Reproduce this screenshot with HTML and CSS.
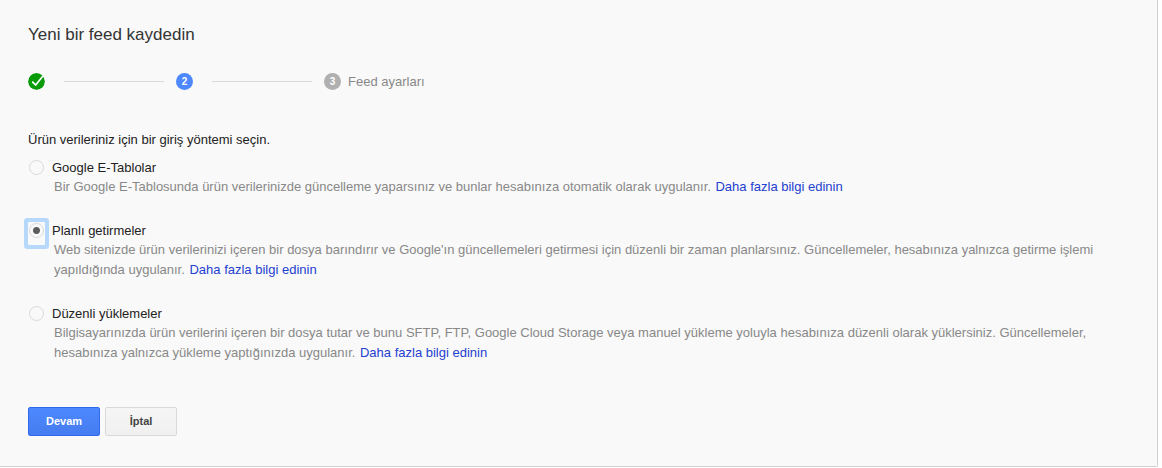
FILE: index.html
```html
<!DOCTYPE html>
<html lang="tr">
<head>
    <meta charset="UTF-8">
    <meta name="viewport" content="width=device-width, initial-scale=1.0">
    <title>Yeni bir feed kaydedin</title>
    <link rel="stylesheet" href="styles.css">
</head>
<body>
    <form class="panel">
        <h1>Yeni bir feed kaydedin</h1>

        <ol class="steps">
            <li class="step">
                <svg class="step-icon" viewBox="0 0 17 17" aria-hidden="true">
                    <circle cx="8.5" cy="8.5" r="8.5" fill="#0a9b0a"/>
                    <path d="M4.2 8.6 L7.7 12 L14.9 3" fill="none" stroke="#fff" stroke-width="1.7"/>
                </svg>
            </li>
            <li class="step">
                <span class="step-icon step-current">2</span>
            </li>
            <li class="step">
                <span class="step-icon step-todo">3</span>
                <span class="step-label">Feed ayarları</span>
            </li>
        </ol>

        <fieldset class="methods">
            <legend>Ürün verileriniz için bir giriş yöntemi seçin.</legend>

            <div class="method">
                <span class="radio"><input type="radio" name="method" id="sheets"></span>
                <label for="sheets">Google E-Tablolar</label>
                <p>Bir Google E-Tablosunda ürün verilerinizde güncelleme yaparsınız ve bunlar hesabınıza otomatik olarak uygulanır. <a href="#">Daha fazla bilgi edinin</a></p>
            </div>

            <div class="method">
                <span class="radio radio-active"><input type="radio" name="method" id="fetch" checked></span>
                <label for="fetch">Planlı getirmeler</label>
                <p>Web sitenizde ürün verilerinizi içeren bir dosya barındırır ve Google'ın güncellemeleri getirmesi için düzenli bir zaman planlarsınız. Güncellemeler, hesabınıza yalnızca getirme işlemi yapıldığında uygulanır. <a href="#">Daha fazla bilgi edinin</a></p>
            </div>

            <div class="method">
                <span class="radio"><input type="radio" name="method" id="upload"></span>
                <label for="upload">Düzenli yüklemeler</label>
                <p>Bilgisayarınızda ürün verilerini içeren bir dosya tutar ve bunu SFTP, FTP, Google Cloud Storage veya manuel yükleme yoluyla hesabınıza düzenli olarak yüklersiniz. Güncellemeler, hesabınıza yalnızca yükleme yaptığınızda uygulanır. <a href="#">Daha fazla bilgi edinin</a></p>
            </div>
        </fieldset>

        <div class="actions">
            <button type="button" class="primary">Devam</button>
            <button type="button">İptal</button>
        </div>
    </form>
</body>
</html>
```

FILE: styles.css
```css
* {
    box-sizing: border-box;
}
body {
    margin: 0;
    padding-right: 4px;
    background-color: #fff;
    color: #222;
    font-family: "Liberation Sans", Arial, sans-serif;
    font-size: 13px;
    line-height: 20px;
}
.panel {
    padding: 25px 28px 30px;
    background-color: #f9f9f9;
    border-right: 1px solid #d2d2d2;
    border-bottom: 1px solid #d2d2d2;
    border-bottom-right-radius: 2px;
}
h1 {
    margin: 0;
    color: #333;
    font-size: 17px;
    font-weight: normal;
    line-height: 20px;
}
.steps {
    display: flex;
    margin: 27px 0 39px;
    padding: 0;
    list-style: none;
}
.step {
    display: flex;
    align-items: center;
    height: 19px;
}
.step:not(:last-child)::after {
    content: "";
    width: 100px;
    height: 1px;
    margin: 0 12px 0 19px;
    background-color: #d9d9d9;
}
.step-icon {
    width: 17px;
    height: 17px;
    border-radius: 50%;
    color: #fff;
    font-size: 10px;
    font-weight: bold;
    line-height: 17px;
    text-align: center;
}
.step-current {
    background-color: #4d88ff;
}
.step-todo {
    background-color: #b0b0b0;
}
.step-label {
    margin-left: 7px;
    color: #888;
}
.methods {
    margin: 0;
    padding: 0;
    border: none;
}
legend {
    margin-bottom: 8px;
    padding: 0;
}
.method {
    display: grid;
    grid-template-columns: 17px 1fr;
    grid-template-rows: 19px auto;
    column-gap: 7px;
    margin-bottom: 24px;
}
.method:last-child {
    margin-bottom: 0;
}
.radio {
    padding: 2px 1px 0;
}
.radio-active {
    height: 23px;
    margin-top: 1px;
    padding-top: 1px;
    border-radius: 1px;
    box-shadow: 0 0 0 4px #b5d8fb;
}
input[type="radio"] {
    display: block;
    appearance: none;
    width: 15px;
    height: 15px;
    margin: 0;
    border: 1px solid #d9d9d9;
    border-radius: 50%;
    outline: none;
}
input[type="radio"]:checked {
    background: radial-gradient(circle, #5c5c5c 3px, transparent 4px);
}
.method p {
    grid-column: 2;
    margin: 0;
    padding-left: 2px;
    color: #888;
}
a {
    margin-left: 1px;
    color: #2440d0;
    text-decoration: none;
}
a:hover {
    text-decoration: underline;
}
.actions {
    display: flex;
    gap: 5px;
    margin-top: 44px;
}
button {
    min-width: 72px;
    height: 29px;
    padding: 0 8px;
    border: 1px solid #d9d9d9;
    border-radius: 2px;
    background: linear-gradient(#f5f5f5, #f0f0f0);
    color: #444;
    font-family: inherit;
    font-size: 11px;
    font-weight: bold;
    line-height: 27px;
    cursor: pointer;
}
button.primary {
    border-color: #2f68ec;
    background: linear-gradient(#4d88ff, #467df0);
    color: #fff;
}
```
